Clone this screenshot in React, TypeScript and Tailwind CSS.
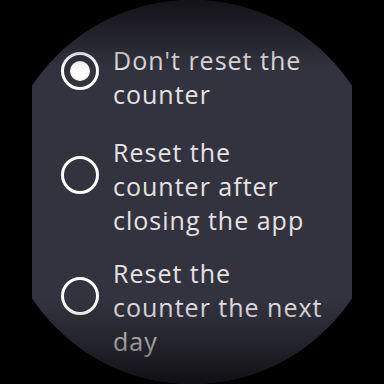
const OPTIONS = [
  { lines: ["Don't reset the", 'counter'], selected: true, top: 'mt-[43px]', radio: 'mt-[9px]' },
  { lines: ['Reset the', 'counter after', 'closing the app'], selected: false, top: 'mt-[24px]', radio: 'mt-[21px]' },
  { lines: ['Reset the', 'counter the next', 'day'], selected: false, top: 'mt-[19px]', radio: 'mt-[21px]' },
]

function Radio({ selected }: { selected: boolean }) {
  return (
    <div className="flex h-[38px] w-[38px] shrink-0 items-center justify-center rounded-full border-[3.5px] border-white">
      {selected && <div className="h-[20px] w-[20px] rounded-full bg-white" />}
    </div>
  )
}

export default function App() {
  return (
    <div className="relative h-[384px] w-[384px] overflow-hidden bg-black">
      <div className="relative mx-8 h-[384px] w-[320px] overflow-hidden bg-[#33333f] [clip-path:circle(192px_at_50%_50%)]">
        <div className="flex flex-col pl-[29px]" style={{ fontFamily: '"Open Sans", "Noto Sans", sans-serif' }}>
          {OPTIONS.map((o) => (
            <div key={o.lines[0] + o.lines[1]} className={`flex items-start gap-[14px] ${o.top}`}>
              <div className={o.radio}>
                <Radio selected={o.selected} />
              </div>
              <p className="whitespace-nowrap text-[25px] leading-[34px] tracking-[1px] text-[#e6e1e5]">
                {o.lines.map((l, i) => (
                  <span key={i} className="block">
                    {l}
                  </span>
                ))}
              </p>
            </div>
          ))}
        </div>
        {/* scroll fades top and bottom */}
        <div className="pointer-events-none absolute inset-x-0 top-0 h-[70px] bg-gradient-to-b from-black/65 to-transparent" />
        <div className="pointer-events-none absolute inset-x-0 bottom-0 h-[84px] bg-gradient-to-t from-black/70 via-black/30 to-transparent" />
      </div>
    </div>
  )
}
